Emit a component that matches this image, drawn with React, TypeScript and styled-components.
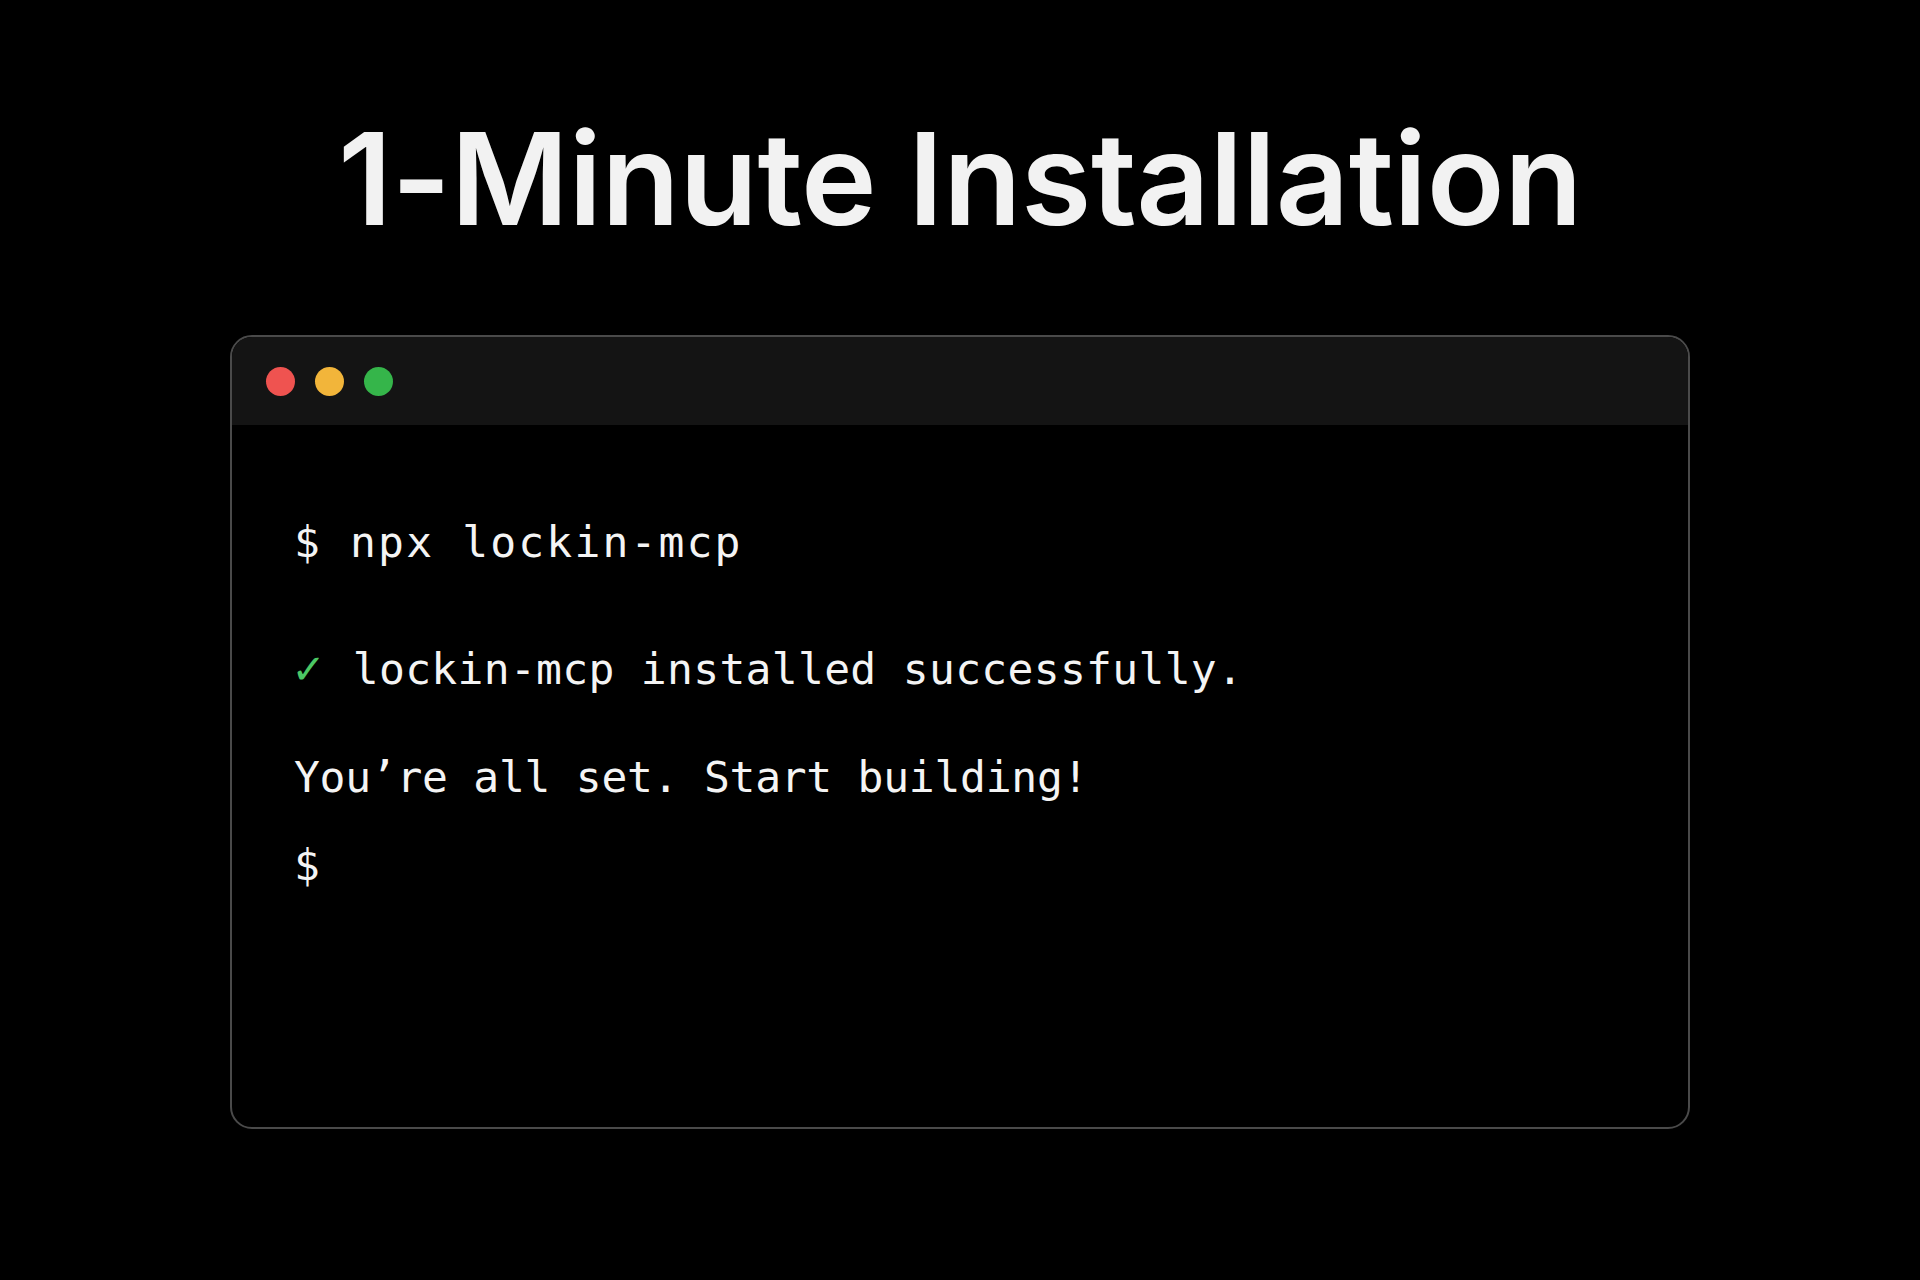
import React from "react";
import styled, { createGlobalStyle } from "styled-components";

const GlobalStyle = createGlobalStyle`
  html, body { margin: 0; padding: 0; background: #000; }
  body { font-family: "Inter", "Liberation Sans", sans-serif; }
`;

const Page = styled.main`
  width: 1920px;
  height: 1280px;
  background: #000;
  display: flex;
  flex-direction: column;
  align-items: center;
  overflow: hidden;
`;

const Title = styled.h1`
  margin: 115px 0 0;
  font-family: "Inter", "Liberation Sans", sans-serif;
  font-size: 128px;
  line-height: 128px;
  height: 128px;
  font-weight: 600;
  letter-spacing: -0.4px;
  color: #f2f2f2;
`;

const Window = styled.section`
  margin-top: 92px;
  width: 1460px;
  height: 794px;
  box-sizing: border-box;
  border: 2px solid #4a4a4a;
  border-radius: 22px;
  background: #000;
  overflow: hidden;
  display: flex;
  flex-direction: column;
`;

const TitleBar = styled.header`
  height: 88px;
  background: #141414;
  display: flex;
  align-items: center;
  gap: 20px;
  padding-left: 34px;
  flex-shrink: 0;
`;

const Dot = styled.span<{ $color: string }>`
  width: 29px;
  height: 29px;
  border-radius: 50%;
  background: ${(p) => p.$color};
`;

const Body = styled.div`
  padding: 91px 62px 0;
  display: flex;
  flex-direction: column;
`;

const Line = styled.div<{ $top: number; $spacing: number }>`
  margin-top: ${(p) => p.$top}px;
  font-family: "DejaVu Sans Mono", "Liberation Mono", monospace;
  font-size: 43px;
  line-height: 52px;
  height: 52px;
  color: #f4f4f4;
  letter-spacing: ${(p) => p.$spacing}px;
  white-space: pre;
`;

const Check = styled.span`
  color: #4cc764;
  font-weight: 700;
  font-size: 47px;
  margin-right: 4px;
`;

export default function App() {
  return (
    <>
      <GlobalStyle />
      <Page>
        <Title>1-Minute Installation</Title>
        <Window>
          <TitleBar>
            <Dot $color="#ef5350" />
            <Dot $color="#f2b53a" />
            <Dot $color="#35b54a" />
          </TitleBar>
          <Body>
            <Line $top={0} $spacing={2.15}>$ npx lockin-mcp</Line>
            <Line $top={74} $spacing={0.3}>
              <Check>✓</Check> lockin-mcp installed successfully.
            </Line>
            <Line $top={57} $spacing={-0.27}>You’re all set. Start building!</Line>
            <Line $top={36} $spacing={0}>$</Line>
          </Body>
        </Window>
      </Page>
    </>
  );
}
